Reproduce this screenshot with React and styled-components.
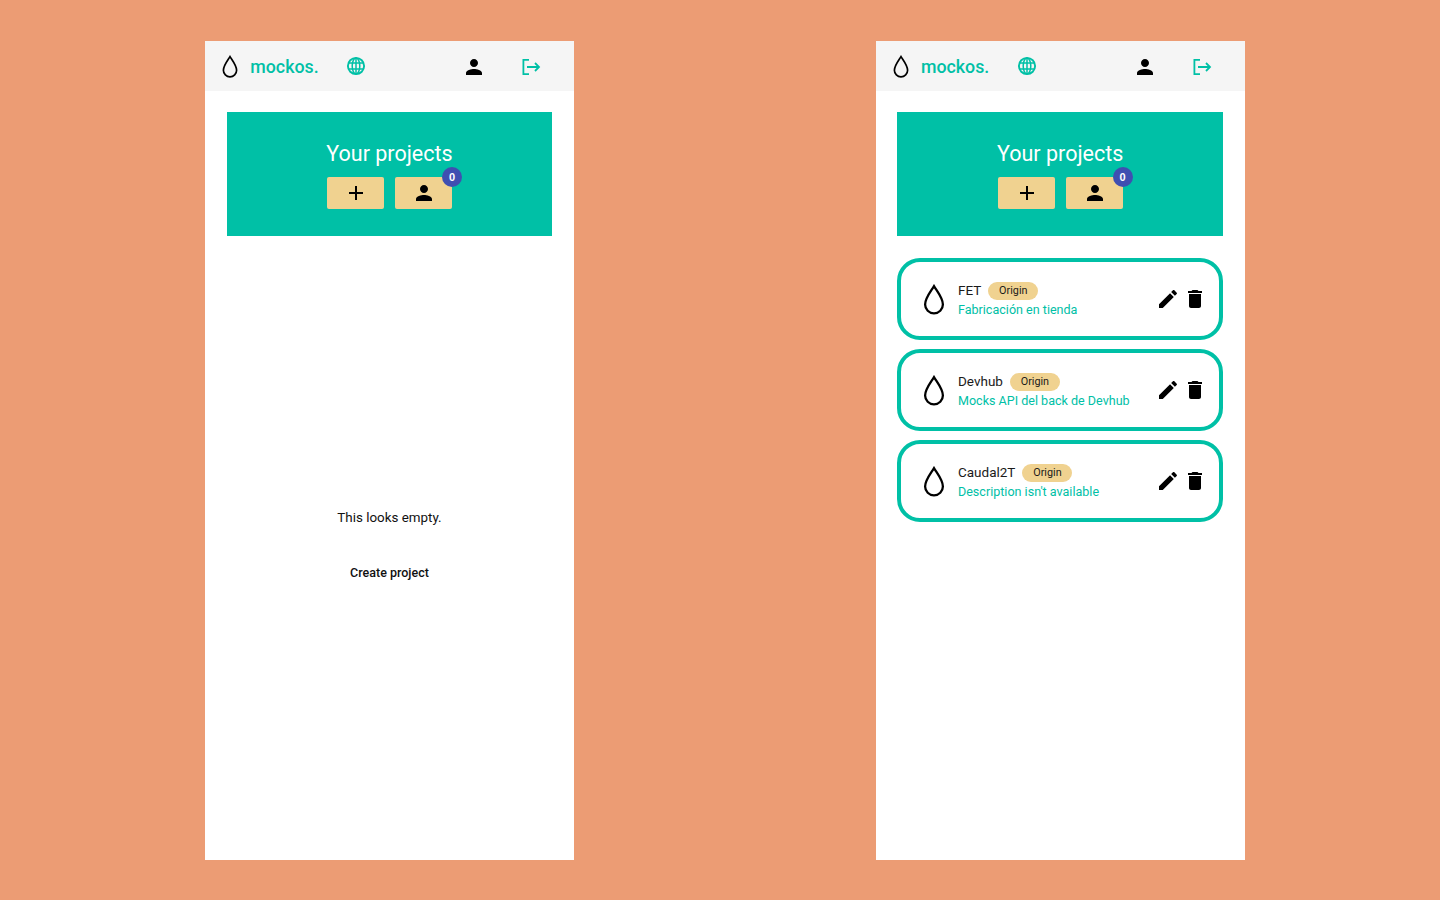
import React from "react";
import styled, { createGlobalStyle } from "styled-components";

const teal = "#00c0a6";
const sand = "#f0d290";

const GlobalStyle = createGlobalStyle`
  html, body {
    margin: 0;
    padding: 0;
    height: 100%;
    background: #ec9c74;
    font-family: Roboto, "Liberation Sans", sans-serif;
  }
`;

const Stage = styled.div`
  height: 900px;
  box-sizing: border-box;
  padding: 41px 0 40px 205.3px;
  display: flex;
  gap: 301.7px;
`;

const Phone = styled.section`
  width: 369px;
  height: 819px;
  background: #ffffff;
  display: flex;
  flex-direction: column;
`;

const Toolbar = styled.header`
  height: 50px;
  flex: none;
  background: #f5f5f5;
  display: flex;
  align-items: center;
  padding-left: 17px;
`;

const Logo = styled.span`
  margin-left: 12px;
  width: 94px;
  font-size: 17.8px;
  font-weight: 500;
  color: ${teal};
`;

const ToolbarGap = styled.div`
  flex: 1;
`;

const ToolbarIcon = styled.span`
  display: flex;
  width: 24px;
  height: 24px;
  margin-top: ${(p) => (p.$flush ? 0 : 1)}px;
  align-items: center;
  justify-content: center;
  margin-right: ${(p) => p.$right || 0}px;
  color: ${(p) => (p.$teal ? teal : "#000")};
`;

const Content = styled.main`
  padding: 21px 22px 0 21.4px;
  display: flex;
  flex-direction: column;
  flex: 1;
`;

const Banner = styled.div`
  height: 124px;
  flex: none;
  background: ${teal};
  display: flex;
  flex-direction: column;
  align-items: center;
  padding-top: 29px;
  box-sizing: border-box;
`;

const Title = styled.h1`
  margin: 0 0 10px;
  font-size: 21.5px;
  line-height: 26px;
  font-weight: 400;
  color: #ffffff;
`;

const ButtonRow = styled.div`
  display: flex;
  gap: 11px;
`;

const SandButton = styled.button`
  position: relative;
  width: 57px;
  height: 32px;
  padding: 0 0 0 1px;
  border: 0;
  border-radius: 2px;
  background: ${sand};
  color: #000;
  display: flex;
  align-items: center;
  justify-content: center;
`;

const Badge = styled.span`
  position: absolute;
  top: -10px;
  right: -10px;
  width: 20px;
  height: 20px;
  border-radius: 50%;
  background: #3f4fb1;
  color: #fff;
  font-size: 11px;
  font-weight: 700;
  line-height: 20px;
  text-align: center;
`;

const EmptyState = styled.div`
  display: flex;
  flex-direction: column;
  align-items: center;
  padding-top: 273px;
`;

const EmptyText = styled.p`
  margin: 0 0 37px;
  font-size: 13.4px;
  line-height: 18px;
  color: #111;
`;

const LinkButton = styled.button`
  border: 0;
  background: none;
  padding: 0;
  font-family: inherit;
  font-size: 12.5px;
  line-height: 18px;
  font-weight: 500;
  color: #111;
`;

const ProjectList = styled.div`
  margin-top: 22px;
  display: flex;
  flex-direction: column;
  gap: 9px;
`;

const ProjectCard = styled.article`
  height: 82px;
  box-sizing: border-box;
  border: 4px solid ${teal};
  border-radius: 23px;
  display: flex;
  align-items: center;
  padding-left: 21.6px;
`;

const ProjectText = styled.div`
  margin-left: 13px;
  padding-top: 2px;
  flex: 1;
  display: flex;
  flex-direction: column;
  gap: 1px;
`;

const NameRow = styled.div`
  display: flex;
  align-items: center;
  gap: 7px;
  height: 18px;
`;

const Name = styled.span`
  font-size: 13.5px;
  margin-bottom: 2px;
  color: #1a1a1a;
`;

const Chip = styled.span`
  width: 50px;
  height: 18px;
  border-radius: 9px;
  background: ${sand};
  font-size: 10.8px;
  line-height: 18px;
  text-align: center;
  color: #1a1a1a;
`;

const Description = styled.span`
  font-size: 12.55px;
  line-height: 18px;
  color: ${teal};
`;

const Actions = styled.div`
  display: flex;
  gap: 3px;
  margin-right: 11.6px;
`;

const Svg = styled.svg`
  display: block;
  fill: currentColor;
`;

const Person = () => (
  <Svg width="24" height="24" viewBox="0 0 24 24">
    <path d="M12 12c2.21 0 4-1.79 4-4s-1.79-4-4-4-4 1.79-4 4 1.79 4 4 4zm0 2c-2.67 0-8 1.34-8 4v2h16v-2c0-2.66-5.33-4-8-4z" />
  </Svg>
);

const Plus = () => (
  <Svg width="24" height="24" viewBox="0 0 24 24">
    <path d="M19 13h-6v6h-2v-6H5v-2h6V5h2v6h6v2z" />
  </Svg>
);

const Edit = () => (
  <Svg width="24" height="24" viewBox="0 0 24 24">
    <path d="M3 17.25V21h3.75L17.81 9.94l-3.75-3.75L3 17.25zM20.71 7.04c.39-.39.39-1.02 0-1.41l-2.34-2.34c-.39-.39-1.02-.39-1.41 0l-1.83 1.83 3.75 3.75 1.83-1.83z" />
  </Svg>
);

const Trash = () => (
  <Svg width="24" height="24" viewBox="0 0 24 24">
    <path d="M6 19c0 1.1.9 2 2 2h8c1.1 0 2-.9 2-2V7H6v12zM19 4h-3.5l-1-1h-5l-1 1H5v2h14V4z" />
  </Svg>
);

const Drop = ({ width, height, weight }) => (
  <svg width={width} height={height} viewBox="0 0 16 23" fill="none" stroke="#000" strokeWidth={weight}>
    <path d="M8 1.6C6 5 1.4 10.4 1.4 15.2a6.6 6.6 0 0 0 13.2 0C14.6 10.4 10 5 8 1.6z" />
  </svg>
);

const Globe = () => (
  <svg width="20" height="20" viewBox="0 0 20 20" fill="none" stroke="currentColor" strokeWidth="1.5">
    <circle cx="10" cy="10" r="8.1" strokeWidth="1.9" />
    <ellipse cx="10" cy="10" rx="3.8" ry="8" />
    <path d="M10 2v16M2.6 7h14.8M2.6 13h14.8" />
  </svg>
);

const LogOut = () => (
  <svg width="20" height="20" viewBox="0 0 20 20" fill="none" stroke="currentColor" strokeWidth="1.8">
    <path d="M8 2.9H2.4v14.2H8M6 10h12M14 6l4 4-4 4" />
  </svg>
);

const Header = () => (
  <Toolbar>
    <Drop width={16} height={23} weight={1.7} />
    <Logo>mockos.</Logo>
    <ToolbarIcon $teal $flush>
      <Globe />
    </ToolbarIcon>
    <ToolbarGap />
    <ToolbarIcon $right={33}>
      <Person />
    </ToolbarIcon>
    <ToolbarIcon $teal $right={31}>
      <LogOut />
    </ToolbarIcon>
  </Toolbar>
);

const ProjectsBanner = () => (
  <Banner>
    <Title>Your projects</Title>
    <ButtonRow>
      <SandButton>
        <Plus />
      </SandButton>
      <SandButton>
        <Person />
        <Badge>0</Badge>
      </SandButton>
    </ButtonRow>
  </Banner>
);

const projects = [
  { name: "FET", description: "Fabricación en tienda" },
  { name: "Devhub", description: "Mocks API del back de Devhub" },
  { name: "Caudal2T", description: "Description isn't available" },
];

export default function App() {
  return (
    <>
      <GlobalStyle />
      <Stage>
        <Phone>
          <Header />
          <Content>
            <ProjectsBanner />
            <EmptyState>
              <EmptyText>This looks empty.</EmptyText>
              <LinkButton>Create project</LinkButton>
            </EmptyState>
          </Content>
        </Phone>
        <Phone>
          <Header />
          <Content>
            <ProjectsBanner />
            <ProjectList>
              {projects.map((project) => (
                <ProjectCard key={project.name}>
                  <Drop width={22} height={31} weight={1.7} />
                  <ProjectText>
                    <NameRow>
                      <Name>{project.name}</Name>
                      <Chip>Origin</Chip>
                    </NameRow>
                    <Description>{project.description}</Description>
                  </ProjectText>
                  <Actions>
                    <Edit />
                    <Trash />
                  </Actions>
                </ProjectCard>
              ))}
            </ProjectList>
          </Content>
        </Phone>
      </Stage>
    </>
  );
}
